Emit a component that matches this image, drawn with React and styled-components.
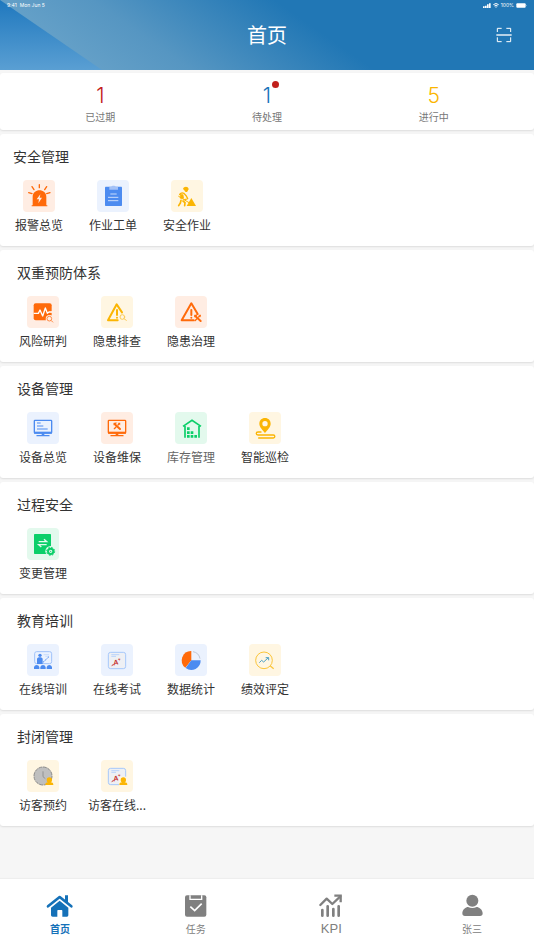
import React from 'react';
import styled, { createGlobalStyle } from 'styled-components';

const sections = [
  {
    title: '安全管理',
    indent: 9,
    items: [
      { label: '报警总览', icon: 'alarm', tint: '#ffede3' },
      { label: '作业工单', icon: 'clipboard', tint: '#ebf2fe' },
      { label: '安全作业', icon: 'worker', tint: '#fff6e2' },
    ],
  },
  {
    title: '双重预防体系',
    items: [
      { label: '风险研判', icon: 'pulse', tint: '#ffede3' },
      { label: '隐患排查', icon: 'hazardSearch', tint: '#fff6e2' },
      { label: '隐患治理', icon: 'hazardFix', tint: '#ffede3' },
    ],
  },
  {
    title: '设备管理',
    items: [
      { label: '设备总览', icon: 'monitor', tint: '#ebf2fe' },
      { label: '设备维保', icon: 'monitorFix', tint: '#ffede3' },
      { label: '库存管理', icon: 'warehouse', tint: '#e3f9ed', muted: true },
      { label: '智能巡检', icon: 'route', tint: '#fff6e2' },
    ],
  },
  {
    title: '过程安全',
    items: [{ label: '变更管理', icon: 'change', tint: '#e3f9ed' }],
  },
  {
    title: '教育培训',
    items: [
      { label: '在线培训', icon: 'training', tint: '#ebf2fe' },
      { label: '在线考试', icon: 'exam', tint: '#ebf2fe' },
      { label: '数据统计', icon: 'pie', tint: '#ebf2fe' },
      { label: '绩效评定', icon: 'performance', tint: '#fff6e2' },
    ],
  },
  {
    title: '封闭管理',
    items: [
      { label: '访客预约', icon: 'visitorClock', tint: '#fff6e2' },
      { label: '访客在线...', icon: 'visitorExam', tint: '#fff6e2' },
    ],
  },
];

const stats = [
  { value: 1, label: '已过期', color: '#c1201c' },
  { value: 1, label: '待处理', color: '#1873b9', dot: true },
  { value: 5, label: '进行中', color: '#fbb500' },
];

const ORANGE = '#ff6a0a';
const BLUE = '#4c8bf0';
const YELLOW = '#fbb503';
const GREEN = '#0bcf69';

const Tools = ({ x, y, color }) => (
  <g
    transform={`translate(${x} ${y})`}
    fill='none'
    stroke={color}
    strokeLinecap='round'
  >
    <path d='M-5 -4L9 9' strokeWidth='6' />
    <path d='M-9 -4L-3 -9M-9 -8L-4 -8' strokeWidth='4' />
    <path d='M8 -8L3 -3M-3 3L-8 8' strokeWidth='4' />
    <path d='M4 -9L5 -5L9 -4' strokeWidth='2' />
  </g>
);

const Visitor = () => (
  <g fill={YELLOW}>
    <circle cx='67' cy='60' r='8' />
    <path d='M63 64H71V67C76 67 79 69 79 74V75H55V74C55 69 58 67 63 67Z' />
  </g>
);

const ExamSheet = () => (
  <g>
    <rect x='22' y='25' width='52' height='49' rx='7' fill='#eef0f4' stroke='#a6c8fb' strokeWidth='3' />
    <path d='M31 32H55M31 37H45' stroke='#b9d3fb' strokeWidth='3' />
    <text
      x='37'
      y='64'
      fontFamily='Liberation Sans, sans-serif'
      fontSize='22'
      fontStyle='italic'
      fontWeight='bold'
      fill='#c6302c'
      transform='rotate(-14 40 58)'
    >
      A
      <tspan fontSize='14' dy='-9'>+</tspan>
    </text>
    <path d='M32 65L38 61' fill='none' stroke='#c6302c' strokeWidth='3' />
  </g>
);

const Screen = ({ color }) => (
  <g fill='none' stroke={color}>
    <rect x='22' y='25' width='52' height='38' rx='2' strokeWidth='4' />
    <path d='M21 62H75' strokeWidth='6' />
    <path d='M48 64V70' strokeWidth='8' />
    <path d='M30 71H66' strokeWidth='4' strokeLinecap='round' />
  </g>
);

const icons = {
  alarm: (
    <g>
      <path d='M29 76V50C29 24 70 24 70 50V76H73V79H26V76Z' fill={ORANGE} />
      <path
        d='M49 14V23M27 20L33 29M71 20L65 29M17 38L27 41M81 38L71 41'
        stroke={ORANGE}
        strokeWidth='4'
        strokeLinecap='round'
      />
      <path d='M52 43L41 58H48L46 70L57 53H50Z' fill='#ffede3' />
    </g>
  ),
  clipboard: (
    <g>
      <rect x='24' y='20' width='51' height='58' rx='2' fill={BLUE} />
      <path d='M37 20H43C44 16 55 16 56 20H63V29H37Z' fill='#a3c1f7' />
      <path d='M40 42H59M33 52H64M33 62H64' stroke='#c9dcfb' strokeWidth='3' />
    </g>
  ),
  worker: (
    <g fill='none' stroke={YELLOW} strokeLinecap='round' strokeLinejoin='round'>
      <path d='M36 27C38 19 51 18 53 27V29H51V31C50 38 42 38 40 31Z' fill={YELLOW} stroke='none' />
      <path d='M26 43Q31 36 39 40L46 48L50 56L41 59' strokeWidth='4' />
      <path d='M28 42V55H38L36 44Z' fill={YELLOW} strokeWidth='2' />
      <path d='M23 49L54 68' strokeWidth='3' />
      <path d='M30 61L28 69L23 77M36 63L42 68L41 77' strokeWidth='5' />
      <path d='M61 54L75 78H47L54 66Z' fill={YELLOW} stroke='none' />
    </g>
  ),
  pulse: (
    <g>
      <rect x='20' y='22' width='54' height='51' rx='6' fill={ORANGE} />
      <path
        d='M20 52H34L39 42L47 60L55 36L61 52L66 48H75'
        fill='none'
        stroke='#fff'
        strokeWidth='4'
        strokeLinejoin='round'
      />
      <circle cx='68' cy='69' r='12' fill='#ffede3' />
      <circle cx='67' cy='68' r='7' fill='none' stroke='#ff8a43' strokeWidth='3' />
      <path d='M72 73L78 79' stroke='#ff8a43' strokeWidth='3' />
    </g>
  ),
  hazardSearch: (
    <g fill='none' stroke={YELLOW} strokeLinecap='round' strokeLinejoin='round'>
      <path d='M50 73H21L47 25L63 49' strokeWidth='6' />
      <path d='M48 42V57' strokeWidth='6' />
      <path d='M48 65V65' strokeWidth='6' />
      <circle cx='64' cy='63' r='7' strokeWidth='3' stroke='#fccb55' />
      <path d='M69 68L76 73' strokeWidth='3' stroke='#fccb55' />
    </g>
  ),
  hazardFix: (
    <g fill='none' stroke={ORANGE} strokeLinecap='round' strokeLinejoin='round'>
      <path d='M56 73H20L49 22L68 54' strokeWidth='6' />
      <path d='M49 42V57' strokeWidth='6' />
      <path d='M49 65V65' strokeWidth='6' />
      <Tools x={68} y={66} color={ORANGE} />
    </g>
  ),
  monitor: (
    <g>
      <Screen color={BLUE} />
      <path d='M30 33H41M30 42H49M30 51H62' stroke={BLUE} strokeWidth='3' />
    </g>
  ),
  monitorFix: (
    <g>
      <Screen color={ORANGE} />
      <Tools x={48} y={42} color={ORANGE} />
    </g>
  ),
  warehouse: (
    <g>
      <path
        d='M24 43L51 25L78 43M30 42V77M72 42V77'
        fill='none'
        stroke={GREEN}
        strokeWidth='5'
      />
      <path
        d='M36 46H44V54H36ZM36 58H44V66H36ZM36 69H44V77H36ZM47 58H55V66H47ZM47 69H55V77H47ZM58 69H66V77H58Z'
        fill={GREEN}
      />
    </g>
  ),
  route: (
    <g>
      <path
        d='M48 18C38 18 31 25 31 35C31 45 41 54 48 63C55 54 65 45 65 35C65 25 58 18 48 18Z'
        fill={YELLOW}
      />
      <circle cx='48' cy='35' r='8' fill='#fff6e2' />
      <path
        d='M36 60H27C20 60 20 69 27 69H73C79 69 79 78 73 78H29'
        fill='none'
        stroke={YELLOW}
        strokeWidth='4'
        strokeLinecap='round'
      />
    </g>
  ),
  change: (
    <g>
      <rect x='21' y='18' width='51' height='60' rx='2' fill={GREEN} />
      <path
        d='M35 41H59L51 34M59 50H35L43 57'
        fill='none'
        stroke='#e3f9ed'
        strokeWidth='4'
      />
      <circle cx='71' cy='70' r='16' fill='#e3f9ed' />
      <circle cx='71' cy='70' r='8' fill='none' stroke={GREEN} strokeWidth='6' />
      <circle cx='71' cy='70' r='12' fill='none' stroke={GREEN} strokeWidth='3' strokeDasharray='5 4.4' />
      <circle cx='71' cy='70' r='2' fill={GREEN} />
    </g>
  ),
  training: (
    <g>
      <rect x='23' y='23' width='51' height='36' rx='6' fill='none' stroke='#9fc2fa' strokeWidth='3' />
      <path d='M50 32H66M55 37H66' stroke='#b9d3fb' strokeWidth='2' />
      <circle cx='39' cy='34' r='5' fill={BLUE} />
      <path d='M30 60V45C30 38 47 38 47 45V60Z' fill={BLUE} />
      <path d='M48 55L66 38' stroke={BLUE} strokeWidth='3' strokeDasharray='5 2' />
      <path
        d='M21 75V69Q23 63 29 63Q35 63 37 69V75ZM40 75V69Q42 63 48 63Q54 63 56 69V75ZM59 75V69Q61 63 67 63Q73 63 75 69V75Z'
        fill={BLUE}
      />
    </g>
  ),
  exam: <ExamSheet />,
  pie: (
    <g>
      <path d='M49 49V21A28 28 0 0 0 31 71Z' fill={ORANGE} />
      <path d='M49 49L32 72A28 28 0 0 0 77 49Z' fill={BLUE} />
      <path d='M54 23A26 26 0 0 1 75 44' fill='none' stroke='#c0c9d8' strokeWidth='3' />
    </g>
  ),
  performance: (
    <g fill='none' stroke='#fbc539' strokeWidth='3'>
      <circle cx='45' cy='49' r='25' />
      <path d='M64 66L74 74' strokeWidth='4' />
      <path d='M31 56L38 49L44 54L58 41M50 41H59V49' stroke='#4b9fc4' />
    </g>
  ),
  visitorClock: (
    <g>
      <circle cx='48' cy='48' r='27' fill='#bfbfbf' />
      <circle
        cx='48'
        cy='48'
        r='27'
        fill='none'
        stroke='#8a8a8a'
        strokeWidth='3'
        strokeDasharray='12 2'
      />
      <path d='M48 34V50L55 56' fill='none' stroke='#7d7d7d' strokeWidth='2' />
      <Visitor />
    </g>
  ),
  visitorExam: (
    <g>
      <ExamSheet />
      <path d='M54 50H82V78H54Z' fill='#fff6e2' />
      <Visitor />
    </g>
  ),
};

const tabs = [
  {
    label: '首页',
    active: true,
    icon: (
      <g>
        <path
          d='M6 37L41 9L76 37'
          fill='none'
          stroke='currentColor'
          strokeWidth='8'
          strokeLinecap='round'
          strokeLinejoin='round'
        />
        <path d='M57 4H66V28L57 22Z' fill='currentColor' />
        <path
          d='M41 20L67 41V64Q67 68 63 68H49V50Q49 48 47 48H36Q34 48 34 50V68H20Q15 68 15 64V41Z'
          fill='currentColor'
        />
      </g>
    ),
  },
  {
    label: '任务',
    icon: (
      <g>
        <rect x='9' y='4' width='64' height='64' rx='6' fill='currentColor' />
        <path d='M24 4V16H59V4' fill='none' stroke='#fff' strokeWidth='4' />
        <path d='M25 38L38 50L59 29' fill='none' stroke='#fff' strokeWidth='5' />
      </g>
    ),
  },
  {
    label: 'KPI',
    latin: true,
    icon: (
      <g fill='none' stroke='currentColor' strokeWidth='7'>
        <path d='M10 33L29 14L46 30L70 7' strokeLinecap='round' strokeLinejoin='round' />
        <path d='M52 5H71V25' />
        <path d='M16 48V65M32 37V65M49 45V65M65 37V65' strokeWidth='8' strokeLinecap='round' />
      </g>
    ),
  },
  {
    label: '张三',
    icon: (
      <g fill='currentColor'>
        <circle cx='43' cy='20' r='18' />
        <path d='M13 58C13 46 24 39 30 39Q43 45 56 39C62 39 74 46 74 58Q74 66 66 66H21Q13 66 13 58Z' />
      </g>
    ),
  },
];

const App = () => {
  return (
    <Page>
      <GlobalStyle />
      <Header>
        <StatusBar>
          <span>9:41</span>
          <span>Mon Jun 5</span>
          <StatusRight>
            <svg width='8' height='5' viewBox='0 0 24 15' fill='#fff'>
              <path d='M0 10H5V15H0ZM6 8H11V15H6ZM12 4H17V15H12ZM18 1H23V15H18Z' />
            </svg>
            <svg width='6' height='5' viewBox='0 0 18 15' fill='none' stroke='#fff' strokeWidth='3'>
              <path d='M1 5Q9 -2 17 5M4 9Q9 4 14 9M9 10V14' />
            </svg>
            <span>100%</span>
            <svg width='11' height='5' viewBox='0 0 33 15' fill='#fff'>
              <rect x='1' y='1' width='28' height='13' rx='3' />
              <path d='M30 5Q33 7 30 10Z' />
            </svg>
          </StatusRight>
        </StatusBar>
        <TitleBar>
          <h1>首页</h1>
          <ScanButton aria-label='扫一扫'>
            <svg width='16' height='16' viewBox='0 0 48 48' fill='none' stroke='#fff' strokeWidth='3'>
              <path d='M4 15V4H17M31 4H44V15M4 31V44H17M31 44H44V31' />
              <path d='M1 24H47' strokeWidth='4' />
            </svg>
          </ScanButton>
        </TitleBar>
      </Header>

      <Main>
        <Stats>
          {stats.map(({ value, label, color, dot }) => (
            <Stat key={label}>
              <StatValue $color={color}>
                {value}
                {dot && <Dot />}
              </StatValue>
              <StatLabel>{label}</StatLabel>
            </Stat>
          ))}
        </Stats>

        {sections.map(({ title, indent, items }) => (
          <Section key={title} $indent={indent}>
            <h2>{title}</h2>
            <Items>
              {items.map(({ label, icon, tint, muted }) => (
                <Item key={label} $muted={muted}>
                  <Tile $tint={tint}>
                    <svg width='32' height='32' viewBox='0 0 96 96'>
                      {icons[icon]}
                    </svg>
                  </Tile>
                  {label}
                </Item>
              ))}
            </Items>
          </Section>
        ))}
      </Main>

      <TabBar>
        {tabs.map(({ label, icon, active, latin }) => (
          <Tab key={label} href='#' $active={active} $latin={latin}>
            <svg width='28' height='24' viewBox='0 0 84 72'>
              {icon}
            </svg>
            <span>{label}</span>
          </Tab>
        ))}
      </TabBar>
    </Page>
  );
};

const GlobalStyle = createGlobalStyle`
  * {
    box-sizing: border-box;
  }
  body {
    margin: 0;
    background: #f6f6f6;
    color: #333;
    font-family: 'Noto Sans CJK SC', sans-serif;
  }
  h1, h2 {
    margin: 0;
    font-weight: 400;
  }
  svg {
    display: block;
  }
`;

const Page = styled.div`
  display: flex;
  flex-direction: column;
  min-height: 100vh;
`;

const Header = styled.header`
  position: relative;
  height: 70px;
  color: #fff;
  background: linear-gradient(#1f78be, #5a9fd3);
  &::before {
    content: '';
    position: absolute;
    inset: 0;
    background: linear-gradient(35deg, #639fc7 60px, #5696c2 110px, #2177b5 215px);
    clip-path: polygon(0 0, 102px 100%, 100% 100%, 100% 0);
  }
`;

const StatusBar = styled.div`
  position: relative;
  display: flex;
  align-items: center;
  gap: 3px;
  height: 11px;
  padding: 0 7px;
  font-family: Inter, sans-serif;
  font-size: 5px;
  line-height: 11px;
`;

const StatusRight = styled.div`
  display: flex;
  align-items: center;
  gap: 2px;
  margin-left: auto;
`;

const TitleBar = styled.div`
  position: relative;
  display: grid;
  grid-template-columns: 1fr auto 1fr;
  align-items: center;
  height: 48px;
  padding: 0 22px;
  h1 {
    grid-column: 2;
    font-size: 20px;
    line-height: 28px;
  }
`;

const ScanButton = styled.button`
  justify-self: end;
  padding: 0;
  border: 0;
  background: none;
  cursor: pointer;
`;

const Main = styled.main`
  flex: 1;
  display: flex;
  flex-direction: column;
  gap: 4px;
  padding: 3px 0 24px;
`;

const Card = styled.section`
  border-radius: 3px;
  background: #fff;
  box-shadow: 0 1px 2px rgba(0, 0, 0, 0.1);
`;

const Stats = styled(Card)`
  display: grid;
  grid-template-columns: repeat(3, 1fr);
  justify-items: center;
  padding: 10px 17px 5px;
`;

const Stat = styled.div`
  display: flex;
  flex-direction: column;
  align-items: center;
`;

const StatValue = styled.div`
  position: relative;
  font-family: Inter, sans-serif;
  font-size: 21px;
  font-weight: 300;
  line-height: 26px;
  color: ${({ $color }) => $color};
`;

const Dot = styled.i`
  position: absolute;
  top: -2px;
  right: -8px;
  width: 7px;
  height: 7px;
  border-radius: 50%;
  background: #c1201c;
`;

const StatLabel = styled.div`
  font-size: 10px;
  line-height: 16px;
  color: #777;
`;

const Section = styled(Card)`
  padding: 11px 13px 12px ${({ $indent = 13 }) => $indent}px;
  h2 {
    padding-left: 4px;
    font-size: 14px;
    line-height: 22px;
  }
`;

const Items = styled.div`
  display: flex;
  flex-wrap: wrap;
  gap: 14px;
  padding-top: 13px;
`;

const Item = styled.button`
  display: flex;
  flex-direction: column;
  align-items: center;
  gap: 3px;
  width: 60px;
  padding: 0;
  border: 0;
  background: none;
  color: ${({ $muted }) => ($muted ? '#666' : '#333')};
  font-family: inherit;
  font-size: 12px;
  line-height: 19px;
  white-space: nowrap;
  cursor: pointer;
`;

const Tile = styled.span`
  border-radius: 4px;
  background: ${({ $tint }) => $tint};
`;

const TabBar = styled.nav`
  display: grid;
  grid-template-columns: 27fr 27fr 28fr 28px;
  height: 71px;
  padding: 15px 48px 0 46px;
  background: #fff;
  box-shadow: 0 -1px 1px rgba(0, 0, 0, 0.03);
`;

const Tab = styled.a`
  display: flex;
  flex-direction: column;
  align-items: center;
  gap: 3px;
  width: 28px;
  color: ${({ $active }) => ($active ? '#1571b8' : '#808080')};
  font-family: ${({ $latin }) =>
    $latin ? "'Liberation Sans', sans-serif" : 'inherit'};
  font-size: ${({ $latin }) => ($latin ? 13 : 10)}px;
  font-weight: ${({ $active }) => ($active ? 700 : 400)};
  line-height: 16px;
  text-decoration: none;
`;

export default App;
